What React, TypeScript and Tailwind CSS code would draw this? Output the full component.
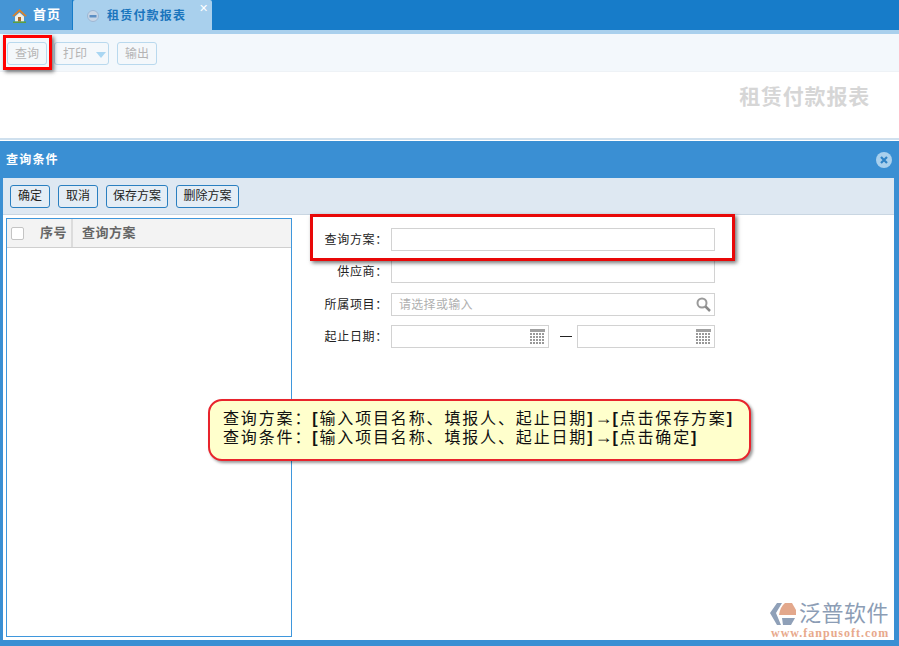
import React from "react";

const cjk = "font-['Liberation_Sans','Noto_Sans_CJK_SC',sans-serif]";

function ToolButton({ children, className = "" }: { children: React.ReactNode; className?: string }) {
  return (
    <div className={`h-[23px] flex items-center rounded-[3px] border border-[#b9d9ee] bg-[#f4f8fb] text-xs text-[#b4b4b4] ${className}`}>
      {children}
    </div>
  );
}

function DialogButton({ children, className = "" }: { children: React.ReactNode; className?: string }) {
  return (
    <div className={`h-[23px] flex items-center justify-center rounded-[3px] border border-[#2a7fc0] bg-[#e4edf5] text-xs text-[#222] ${className}`}>
      {children}
    </div>
  );
}

function Label({ children }: { children: React.ReactNode }) {
  return <div className="w-[88px] mr-[3px] text-right text-xs text-[#222] tracking-[0.7px] whitespace-nowrap">{children}</div>;
}

function CalendarIcon() {
  return (
    <svg width="15" height="15" viewBox="0 0 15 15" className="absolute right-[3px] top-[3px]">
      <rect x="0" y="0" width="15" height="3" fill="#a0a0a0" />
      {[4, 7, 10, 13].map((y) =>
        [0, 3, 6, 9, 12].map((x) => <rect key={`${x}-${y}`} x={x} y={y} width="2" height="2" fill="#999" />)
      )}
    </svg>
  );
}

function Logo() {
  return (
    <div className="absolute left-[769px] top-[601px] w-[122px] pointer-events-none">
      <div className="flex items-center">
        <svg width="30" height="25" viewBox="0 0 30 25">
          <path d="M1 12 L8 2 L13 2 L7 12 L12 24 L8 24 Z" fill="#8fa0b8" />
          <path d="M16 2 H23 L27 9 V14 H10 Q11 6 16 2 Z" fill="#e3a88c" />
          <path d="M13 17 H26 L22 24 H14 Z" fill="#8fa0b8" />
        </svg>
        <div className="text-[22px] leading-[25px] text-[#8c9db5] tracking-[0.5px] whitespace-nowrap">泛普软件</div>
      </div>
      <div className="mt-[1px] ml-[2px] text-[12px] leading-[12px] font-bold font-['Liberation_Serif',serif] text-[#e8a98c] tracking-[1px] whitespace-nowrap">
        www.fanpusoft.com
      </div>
    </div>
  );
}

function NoteLine({ head, fields, action }: { head: string; fields: string; action: string }) {
  return (
    <div className="tracking-[1.85px]">
      {head}
      <b>[</b>
      {fields}
      <b>]</b>
      <span className="tracking-normal text-[18px] leading-[19px]">→</span>
      <b>[</b>
      {action}
      <b>]</b>
    </div>
  );
}

export default function App() {
  return (
    <div className={`relative w-[899px] h-[646px] overflow-hidden bg-white ${cjk}`}>
      {/* tabs */}
      <div className="h-[30px] bg-[#177cc9] flex">
        <div className="w-[72px] bg-[#4595d5] flex items-center pl-[12px] gap-[6px] text-[13px] font-bold text-white">
          <svg width="15" height="15" viewBox="0 0 15 15">
            <path d="M7.5 1 L15 8 L13 8.5 L7.5 3.5 L2 8.5 L0 8 Z" fill="#d9822b" />
            <path d="M3 8.5 L7.5 4.5 L12 8.5 V13.5 H3 Z" fill="#f4efe2" />
            <rect x="6" y="9" width="3" height="4.5" fill="#a8692d" />
            <rect x="1" y="13.5" width="13" height="1.5" fill="#5ca03c" />
          </svg>
          <span className="tracking-[1px]">首页</span>
        </div>
        <div className="relative ml-[1px] w-[139px] rounded-t-[2px] bg-[#a9d0ed] flex items-center pl-[14px] gap-[8px] pt-[1px]">
          <svg width="12" height="12" viewBox="0 0 12 12">
            <circle cx="6" cy="6" r="5.5" fill="#c8d6e6" stroke="#9db7d4" />
            <rect x="2.5" y="5" width="7" height="2.5" fill="#5d8fc4" />
          </svg>
          <span className="text-xs font-bold text-[#1a75bd] tracking-[1.2px] whitespace-nowrap">租赁付款报表</span>
          <span className="absolute right-[4px] top-[1px] text-[11px] leading-[14px] text-white">✕</span>
        </div>
      </div>
      <div className="h-[4px] bg-[#a9d0ed]" />
      {/* toolbar */}
      <div className="h-[38px] bg-[#f3f8fc] border-b border-[#eef2f6] flex items-center pl-[7px] pt-[2px]">
        <ToolButton className="w-[40px] justify-center">查询</ToolButton>
        <ToolButton className="ml-[7px] w-[55px] pl-[8px] gap-[9px]">
          <span>打印</span>
          <span className="w-0 h-0 border-x-[5px] border-x-transparent border-t-[6px] border-t-[#a9d6f2] mt-[2px]" />
        </ToolButton>
        <ToolButton className="ml-[8px] w-[40px] justify-center">输出</ToolButton>
      </div>
      {/* report title */}
      <div className="h-[68px] flex justify-end pr-[29px] pt-[12px] border-b-[2px] border-[#cfe0ee]">
        <div className="text-[21px] leading-[25px] font-bold text-[#d6d6d6] tracking-[0.8px] whitespace-nowrap">租赁付款报表</div>
      </div>
      {/* dialog */}
      <div className="mt-[1px] h-[505px] bg-[#3a8fd3] flex flex-col">
        <div className="h-[37px] flex items-center justify-between pl-[6px] pr-[7px] text-xs font-bold text-white tracking-[1.2px]">
          <span>查询条件</span>
          <svg width="16" height="16" viewBox="0 0 16 16">
            <circle cx="8" cy="8" r="8" fill="#a9d0ed" />
            <path d="M5 5 L11 11 M11 5 L5 11" stroke="#2f83c6" strokeWidth="2.2" />
          </svg>
        </div>
        <div className="ml-[3px] mr-[5px] mb-[6px] flex-1 flex flex-col bg-white min-h-0">
          <div className="h-[37px] bg-[#dee8f2] border-b border-[#c9d6e2] flex items-center pl-[7px] gap-[8px]">
            <DialogButton className="w-[40px]">确定</DialogButton>
            <DialogButton className="w-[40px]">取消</DialogButton>
            <DialogButton className="w-[62px]">保存方案</DialogButton>
            <DialogButton className="w-[63px]">删除方案</DialogButton>
          </div>
          <div className="flex-1 flex min-h-0">
            {/* scheme list */}
            <div className="ml-[3px] mt-[3px] mb-[3px] w-[286px] border border-[#3f97dc] flex flex-col">
              <div className="h-[29px] bg-[#f3f3f3] border-b border-[#cfcfcf] flex text-[13px] font-bold text-[#666]">
                <div className="w-[66px] border-r-[2px] border-[#dcdcdc] flex items-center pl-[4px]">
                  <span className="w-[13px] h-[13px] rounded-[2px] border border-[#c4c4c4] bg-white" />
                  <span className="ml-[16px] tracking-[0.5px]">序号</span>
                </div>
                <div className="flex-1 flex items-center pl-[9px] tracking-[0.5px]">查询方案</div>
              </div>
            </div>
            {/* form */}
            <div className="pl-[8px] pt-[13px] flex flex-col">
              <div className="flex items-center h-[23px]">
                <Label>查询方案：</Label>
                <div className="w-[324px] h-[23px] border border-[#d2d2d2] bg-white" />
              </div>
              <div className="flex items-center h-[23px] mt-[9px]">
                <Label>供应商：</Label>
                <div className="w-[324px] h-[23px] border border-[#d2d2d2] bg-white" />
              </div>
              <div className="flex items-center h-[23px] mt-[10px]">
                <Label>所属项目：</Label>
                <div className="relative w-[324px] h-[23px] border border-[#d2d2d2] bg-white flex items-center pl-[7px] text-xs text-[#b0b0b0] tracking-[0.3px]">
                  请选择或输入
                  <svg width="15" height="15" viewBox="0 0 15 15" className="absolute right-[3px] top-[3px]">
                    <circle cx="6" cy="6" r="4.5" fill="none" stroke="#9a9a9a" strokeWidth="2" />
                    <path d="M9.5 9.5 L14 14" stroke="#8a8a8a" strokeWidth="2.5" />
                  </svg>
                </div>
              </div>
              <div className="flex items-center h-[23px] mt-[9px]">
                <Label>起止日期：</Label>
                <div className="relative w-[158px] h-[23px] border border-[#d2d2d2] bg-white">
                  <CalendarIcon />
                </div>
                <div className="ml-[11px] w-[12px] h-[1px] bg-[#222]" />
                <div className="relative ml-[5px] w-[138px] h-[23px] border border-[#d2d2d2] bg-white">
                  <CalendarIcon />
                </div>
              </div>
            </div>
          </div>
        </div>
      </div>

      {/* annotations lying over the page */}
      <div className="absolute left-[3px] top-[35px] w-[49px] h-[35px] border-[3px] border-[#ff0000] shadow-[2px_2px_4px_rgba(0,0,0,0.55)]" />
      <div className="absolute left-[310px] top-[214px] w-[425px] h-[47px] border-[3px] border-[#e80808] shadow-[2px_2px_4px_rgba(0,0,0,0.55)]" />
      <div className="absolute left-[208px] top-[399px] w-[543px] h-[62px] rounded-[14px] border-[2px] border-[#e8242c] bg-[#ffffcc] shadow-[2px_2px_3px_rgba(0,0,0,0.4)] pl-[13px] pt-[8px] text-[16px] leading-[19px] text-[#111] whitespace-nowrap">
        <NoteLine head="查询方案：" fields="输入项目名称、填报人、起止日期" action="点击保存方案" />
        <NoteLine head="查询条件：" fields="输入项目名称、填报人、起止日期" action="点击确定" />
      </div>
      <Logo />
    </div>
  );
}
